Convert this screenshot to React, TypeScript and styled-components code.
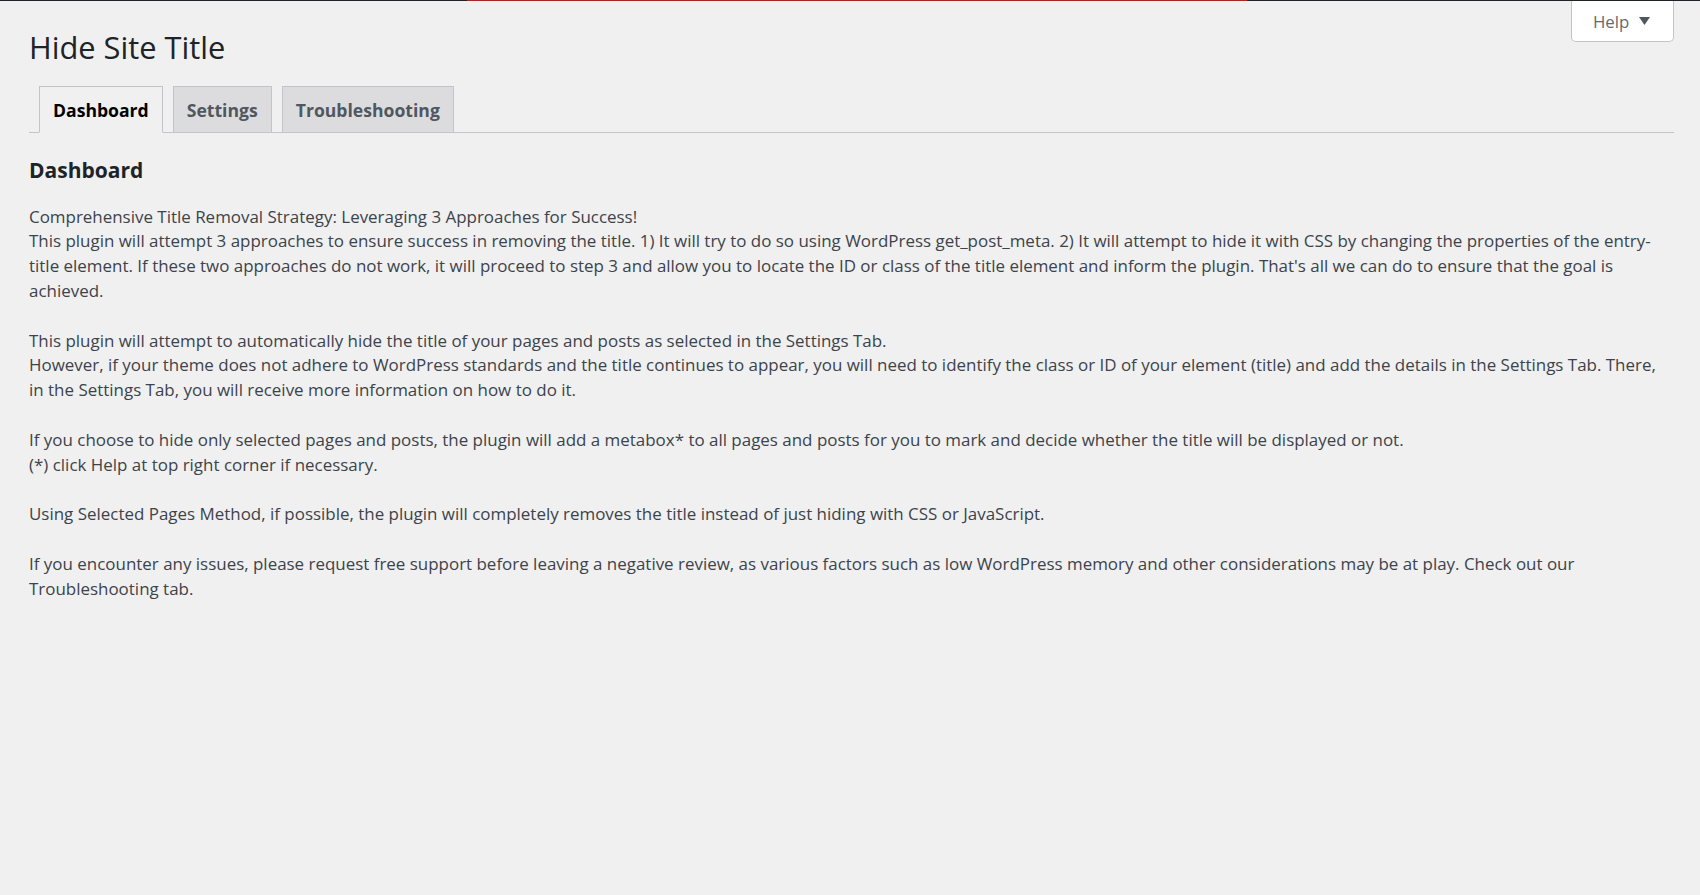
import React from "react";
import styled, { createGlobalStyle } from "styled-components";

const Global = createGlobalStyle`
  html, body {
    margin: 0;
    padding: 0;
    background: #f0f0f1;
  }
  body {
    font-family: "Open Sans", "Noto Sans", sans-serif;
    color: #3c434a;
  }
  * { box-sizing: border-box; }
`;

const TopBar = styled.div`
  display: flex;
  height: 1px;
  background: #1d2327;
`;

const Progress = styled.div<{ $start: number; $width: number }>`
  margin-left: ${(p) => p.$start}px;
  width: ${(p) => p.$width}px;
  height: 1px;
  background: #ff0000;
`;

const Wrap = styled.div`
  margin: 0 26px 0 29px;
`;

const HelpTab = styled.button`
  float: right;
  display: flex;
  align-items: center;
  gap: 10px;
  height: 41px;
  width: 103px;
  padding: 0 22px 0 21px;
  background: #fff;
  border: 1px solid #c3c4c7;
  border-top: none;
  border-radius: 0 0 5px 5px;
  font-family: "Open Sans", "Noto Sans", sans-serif;
  font-size: 16.8px;
  color: #646970;
  cursor: pointer;
`;

const Title = styled.h1`
  margin: 0;
  padding: 27px 0 19px;
  font-size: 30.8px;
  line-height: 39px;
  font-weight: 400;
  color: #1d2327;
`;

const TabNav = styled.nav`
  display: flex;
  border-bottom: 1px solid #c3c4c7;
`;

const Tab = styled.a<{ $active?: boolean }>`
  margin: 0 0 -1px 10px;
  padding: 7px 13px 6px;
  font-size: 17.6px;
  line-height: 32px;
  font-weight: 700;
  text-decoration: none;
  border: 1px solid #c3c4c7;
  border-bottom-color: ${(p) => (p.$active ? "#f0f0f1" : "#c3c4c7")};
  background: ${(p) => (p.$active ? "#f0f0f1" : "#dcdcde")};
  color: ${(p) => (p.$active ? "#000" : "#50575e")};
  cursor: pointer;
`;

const SectionTitle = styled.h2`
  margin: 23px 0 20px;
  font-size: 21px;
  line-height: 28.6px;
  font-weight: 700;
  color: #1d2327;
`;

const Text = styled.p`
  margin: 0 0 24.8px;
  font-size: 16.94px;
  line-height: 24.8px;
  color: #3c434a;
`;

const Arrow = () => (
  <svg width="11" height="8" viewBox="0 0 11 8" aria-hidden="true">
    <path d="M0 0 H11 L5.5 8 Z" fill="#50575e" />
  </svg>
);

export default function App() {
  return (
    <>
      <Global />
      <TopBar>
        <Progress $start={467} $width={780} />
      </TopBar>
      <Wrap>
        <HelpTab type="button">
          <span>Help</span>
          <Arrow />
        </HelpTab>
        <Title>Hide Site Title</Title>
        <TabNav>
          <Tab $active>Dashboard</Tab>
          <Tab>Settings</Tab>
          <Tab>Troubleshooting</Tab>
        </TabNav>
        <SectionTitle>Dashboard</SectionTitle>
        <Text>
          Comprehensive Title Removal Strategy: Leveraging 3 Approaches for Success!
          <br />
          This plugin will attempt 3 approaches to ensure success in removing the title. 1) It will try to do so using
          WordPress get_post_meta. 2) It will attempt to hide it with CSS by changing the properties of the entry-title
          element. If these two approaches do not work, it will proceed to step 3 and allow you to locate the ID or class
          of the title element and inform the plugin. That's all we can do to ensure that the goal is achieved.
        </Text>
        <Text>
          This plugin will attempt to automatically hide the title of your pages and posts as selected in the Settings Tab.
          <br />
          However, if your theme does not adhere to WordPress standards and the title continues to appear, you will need to
          identify the class or ID of your element (title) and add the details in the Settings Tab. There, in the Settings
          Tab, you will receive more information on how to do it.
        </Text>
        <Text>
          If you choose to hide only selected pages and posts, the plugin will add a metabox* to all pages and posts for
          you to mark and decide whether the title will be displayed or not.
          <br />
          (*) click Help at top right corner if necessary.
        </Text>
        <Text>
          Using Selected Pages Method, if possible, the plugin will completely removes the title instead of just hiding
          with CSS or JavaScript.
        </Text>
        <Text>
          If you encounter any issues, please request free support before leaving a negative review, as various factors
          such as low WordPress memory and other considerations may be at play. Check out our Troubleshooting tab.
        </Text>
      </Wrap>
    </>
  );
}
